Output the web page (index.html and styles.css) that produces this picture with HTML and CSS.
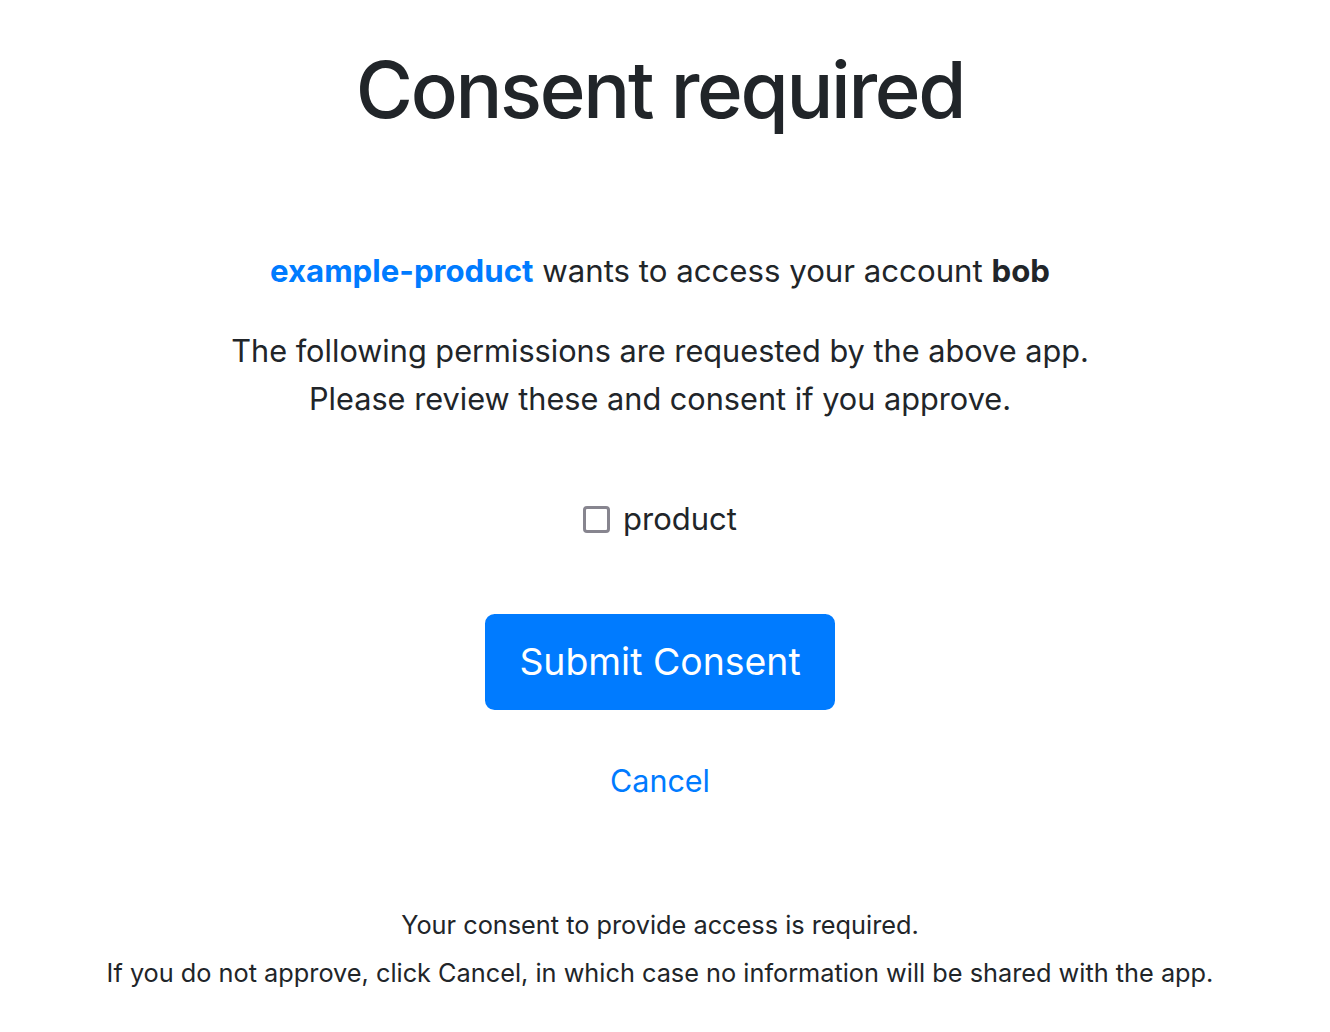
FILE: index.html
```html
<!DOCTYPE html>
<html lang="en">
<head>
<meta charset="utf-8">
<title>Consent required</title>
<link rel="stylesheet" href="styles.css">
</head>
<body>
<main class="page">
  <h1 class="title">Consent required</h1>
  <p class="request"><a class="app-link" href="#">example-product</a> wants to access your account <strong>bob</strong></p>
  <p class="intro">The following permissions are requested by the above app.<br>Please review these and consent if you approve.</p>
  <label class="scope"><input class="scope-box" type="checkbox" name="scope" value="product"><span>product</span></label>
  <button class="btn-submit" type="button">Submit Consent</button>
  <a class="cancel" href="#">Cancel</a>
  <p class="note note-first">Your consent to provide access is required.</p>
  <p class="note">If you do not approve, click Cancel, in which case no information will be shared with the app.</p>
</main>
</body>
</html>
```
FILE: styles.css
```css
* { box-sizing: border-box; }
html, body { margin: 0; background: #fff; }
body {
  font-family: Inter, "Noto Sans", "Liberation Sans", sans-serif;
  color: #212529;
  font-size: 32px;
  line-height: 1.5;
}
.page {
  display: flex;
  flex-direction: column;
  align-items: center;
  text-align: center;
  padding-right: 10px;
}
.title {
  margin: 39px 0 0;
  font-size: 78px;
  line-height: 101px;
  font-weight: 500;
  letter-spacing: -2.3px;
}
.request {
  margin: 107px 0 0;
  line-height: 48px;
  font-size: 31.2px;
}
.app-link {
  color: #007bff;
  text-decoration: none;
  font-weight: 700;
}
.request strong { font-weight: 700; }
.intro {
  margin: 32px 0 0;
  line-height: 48px;
  font-size: 30.7px;
}
.scope {
  margin-top: 72px;
  display: flex;
  align-items: center;
  gap: 13px;
  line-height: 48px;
  font-size: 31px;
}
.scope-box {
  appearance: none;
  -webkit-appearance: none;
  margin: 0;
  width: 27px;
  height: 27px;
  border: 3.5px solid #87858f;
  border-radius: 4px;
  background: #fff;
}
.btn-submit {
  margin-top: 71px;
  width: 350px;
  height: 96px;
  padding: 0 32px;
  border: 2px solid #007bff;
  border-radius: 9.6px;
  background: #007bff;
  color: #fff;
  font-family: inherit;
  font-size: 37.4px;
  line-height: 1.5;
}
.cancel {
  margin-top: 47px;
  color: #007bff;
  text-decoration: none;
  line-height: 48px;
  font-size: 30.5px;
}
.note {
  margin: 10px 0 0;
  font-size: 25.3px;
  line-height: 38px;
}
.note-first { margin-top: 101px; }
```
